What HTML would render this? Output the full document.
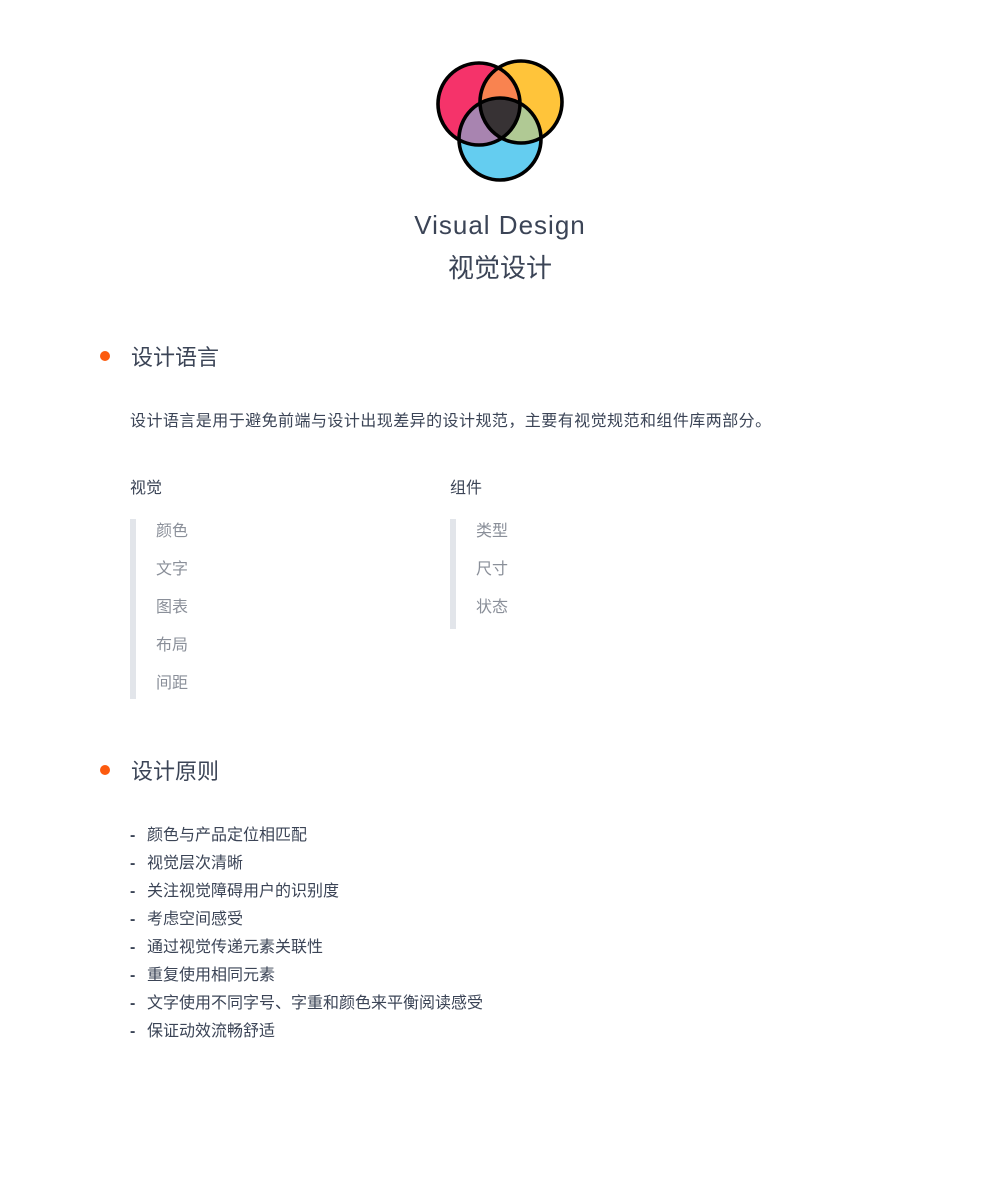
<!DOCTYPE html>
<html><head><meta charset="utf-8"><style>
*{margin:0;padding:0;box-sizing:border-box}
body{width:1000px;height:1200px;background:#fff;font-family:"Liberation Sans","Noto Sans CJK SC",sans-serif;color:#3b4456;position:relative;overflow:hidden}
.a{position:absolute;white-space:nowrap}
.dot{position:absolute;width:10px;height:10px;border-radius:50%;background:#fc5a0e}
.h{font-size:22px;line-height:30px;color:#3b4456}
.p{font-size:16px;line-height:20px}
.g{font-size:16px;line-height:20px;color:#8a8f99}
.bar{position:absolute;width:6px;background:#e2e5ea}
.li{font-size:16px;line-height:20px;color:#3b4456}
.li b{display:inline-block;width:17px;font-weight:bold}
</style></head><body>
<svg class="a" style="left:0;top:0" width="1000" height="200" viewBox="0 0 1000 200">
<defs>
<clipPath id="cp"><circle cx="479" cy="104" r="41"/></clipPath>
<clipPath id="cy"><circle cx="521" cy="102" r="41"/></clipPath>
<clipPath id="cb"><circle cx="500" cy="139" r="41"/></clipPath>
</defs>
<circle cx="479" cy="104" r="41" fill="#f5336a"/>
<circle cx="521" cy="102" r="41" fill="#ffc43a"/>
<circle cx="500" cy="139" r="41" fill="#64cdf0"/>
<circle cx="521" cy="102" r="41" fill="#f98350" clip-path="url(#cp)"/>
<circle cx="500" cy="139" r="41" fill="#a884b0" clip-path="url(#cp)"/>
<circle cx="500" cy="139" r="41" fill="#b0c994" clip-path="url(#cy)"/>
<g clip-path="url(#cp)"><circle cx="500" cy="139" r="41" fill="#373234" clip-path="url(#cy)"/></g>
<g fill="none" stroke="#000" stroke-width="3.6">
<circle cx="479" cy="104" r="41"/>
<circle cx="521" cy="102" r="41"/>
<circle cx="500" cy="139" r="41"/>
</g>
</svg>
<div class="a" style="left:0;width:1000px;top:208px;text-align:center;font-size:26px;line-height:34px;letter-spacing:1px;color:#3b4456">Visual Design</div>
<div class="a" style="left:0;width:1000px;top:251px;text-align:center;font-size:26px;line-height:34px;color:#3b4456">视觉设计</div>

<div class="dot" style="left:100px;top:351px"></div>
<div class="a h" style="left:131px;top:343px">设计语言</div>
<div class="a p" style="left:130px;top:412px;letter-spacing:0.45px">设计语言是用于避免前端与设计出现差异的设计规范，主要有视觉规范和组件库两部分。</div>

<div class="a p" style="left:130px;top:479px">视觉</div>
<div class="a p" style="left:450px;top:479px">组件</div>
<div class="bar" style="left:130px;top:519px;height:180px"></div>
<div class="bar" style="left:450px;top:519px;height:110px"></div>
<div class="a g" style="left:156px;top:522px">颜色</div>
<div class="a g" style="left:156px;top:560px">文字</div>
<div class="a g" style="left:156px;top:598px">图表</div>
<div class="a g" style="left:156px;top:636px">布局</div>
<div class="a g" style="left:156px;top:674px">间距</div>
<div class="a g" style="left:476px;top:522px">类型</div>
<div class="a g" style="left:476px;top:560px">尺寸</div>
<div class="a g" style="left:476px;top:598px">状态</div>

<div class="dot" style="left:100px;top:765px"></div>
<div class="a h" style="left:131px;top:757px">设计原则</div>
<div class="a li" style="left:130px;top:826px"><b>-</b>颜色与产品定位相匹配</div>
<div class="a li" style="left:130px;top:854px"><b>-</b>视觉层次清晰</div>
<div class="a li" style="left:130px;top:882px"><b>-</b>关注视觉障碍用户的识别度</div>
<div class="a li" style="left:130px;top:910px"><b>-</b>考虑空间感受</div>
<div class="a li" style="left:130px;top:938px"><b>-</b>通过视觉传递元素关联性</div>
<div class="a li" style="left:130px;top:966px"><b>-</b>重复使用相同元素</div>
<div class="a li" style="left:130px;top:994px"><b>-</b>文字使用不同字号、字重和颜色来平衡阅读感受</div>
<div class="a li" style="left:130px;top:1022px"><b>-</b>保证动效流畅舒适</div>
</body></html>
